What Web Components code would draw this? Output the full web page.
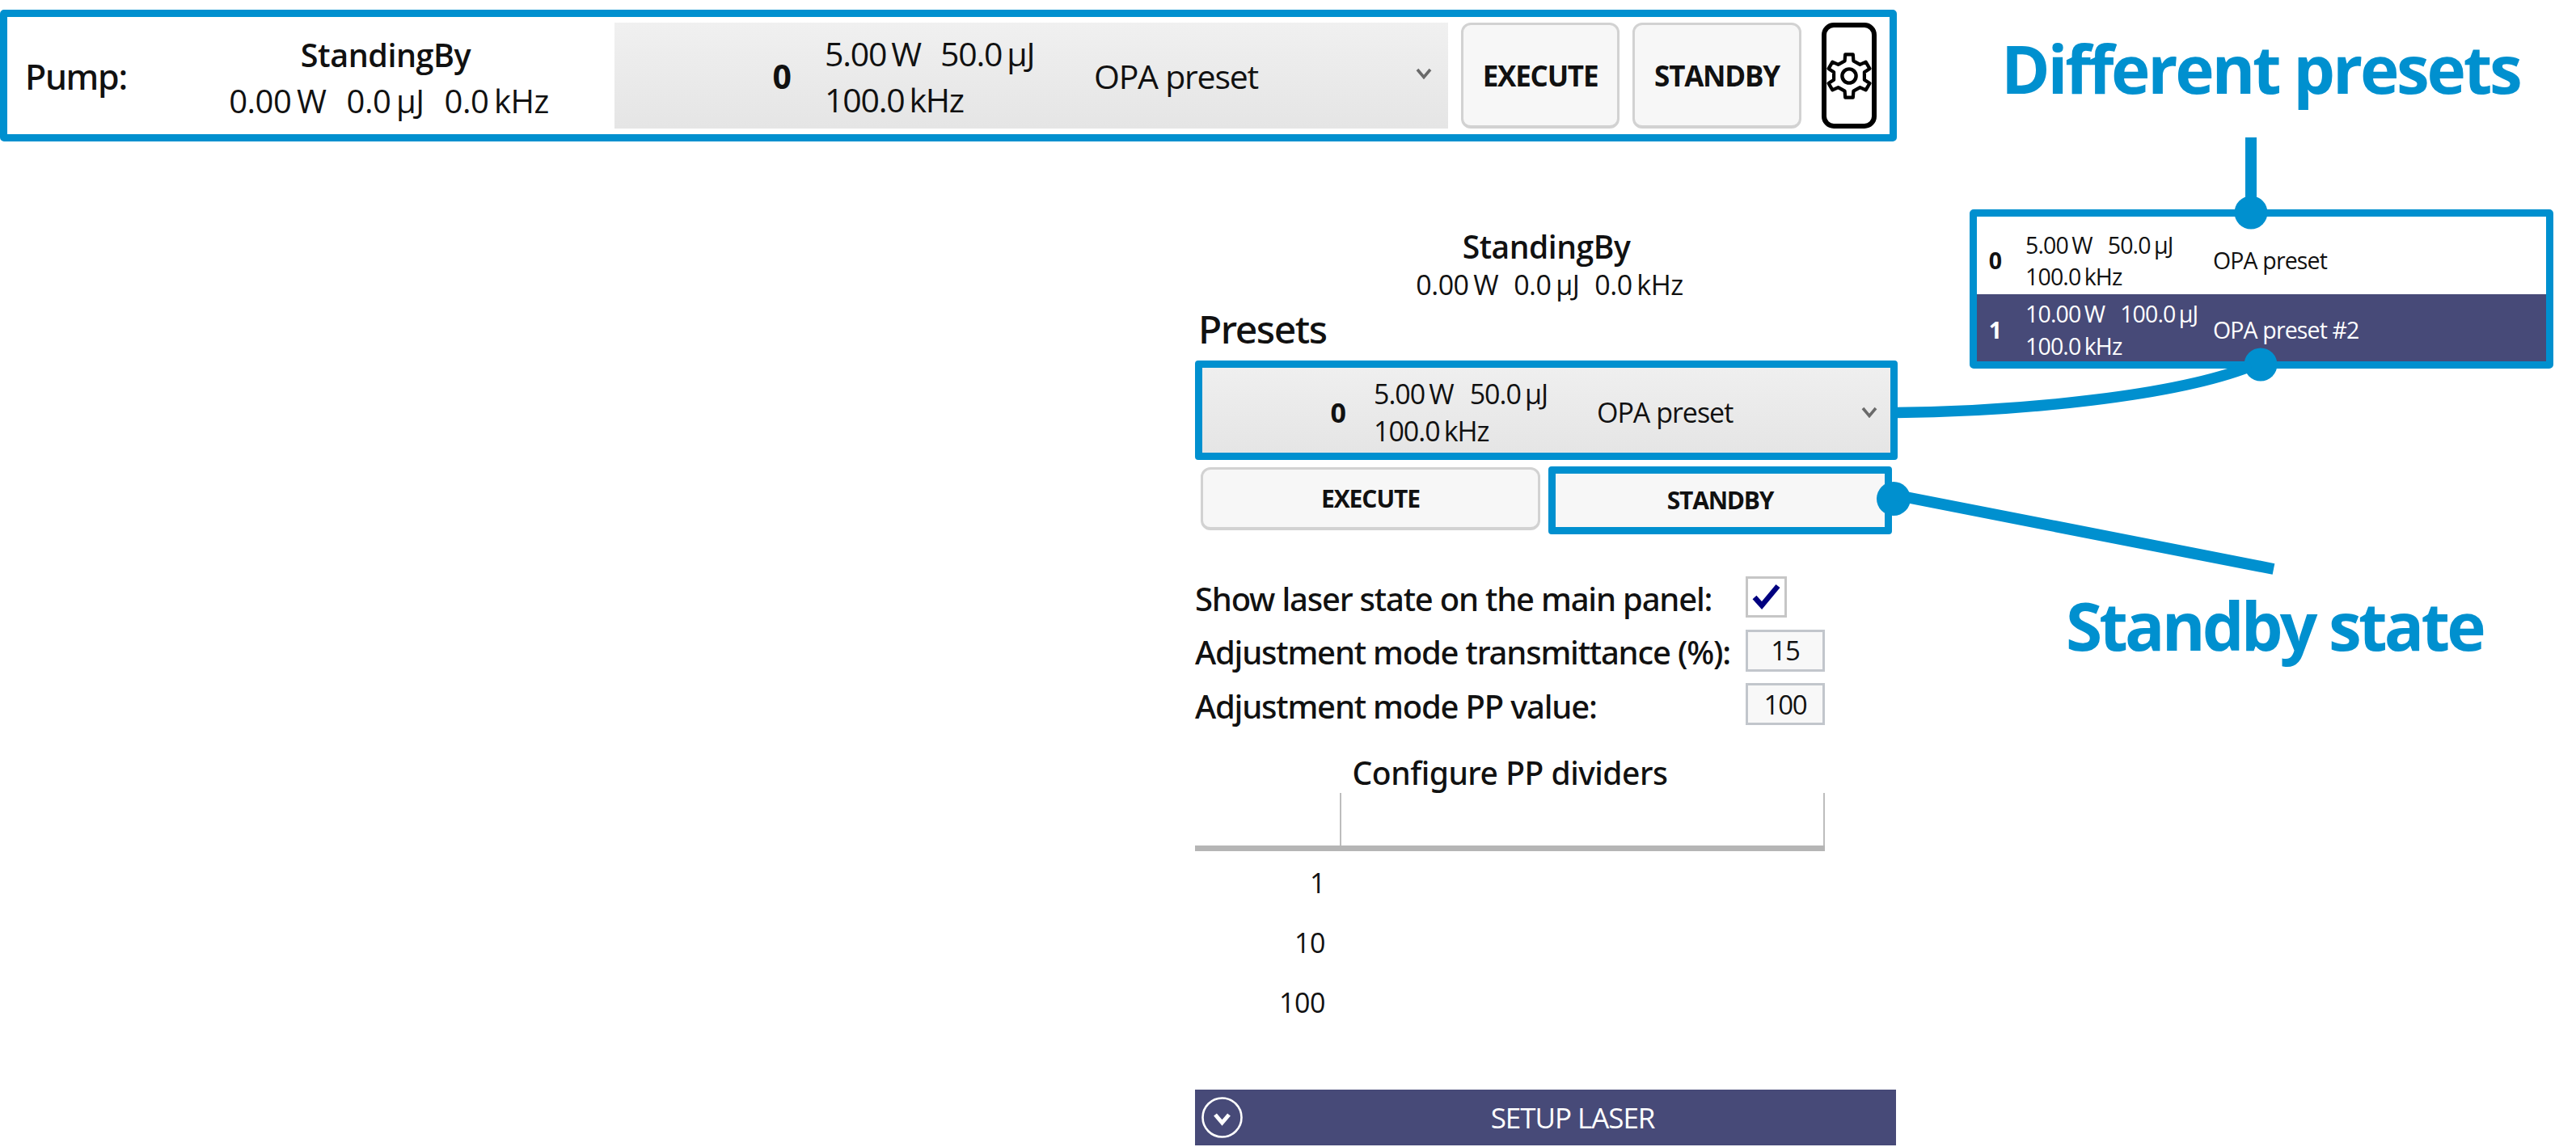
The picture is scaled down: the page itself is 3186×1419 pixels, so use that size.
<!DOCTYPE html>
<html>
<head>
<meta charset="utf-8">
<title>Pump presets</title>
<style>
  html, body { margin: 0; background: #fff; overflow: hidden; }
  body { position: relative; width: 3186px; height: 1419px; font-family: "Open Sans", "Liberation Sans", sans-serif; color: #111; }
</style>
</head>
<body>
  <annotated-page></annotated-page>

<script>
const BLUE = '#0090cf';
const NAVY = '#474a78';
const MEDIUM = '"Noto Sans", "Open Sans", sans-serif';

function gearPath(cx, cy, rOut, rRoot, teeth) {
  const pts = [];
  const step = Math.PI * 2 / teeth;
  for (let i = 0; i < teeth; i++) {
    const a = -Math.PI / 2 + i * step;
    const at = (r, d) => (cx + r * Math.cos(a + d)).toFixed(1) + ' ' + (cy + r * Math.sin(a + d)).toFixed(1);
    pts.push(at(rRoot, -step * 0.27), at(rOut, -step * 0.17), at(rOut, step * 0.17), at(rRoot, step * 0.27));
  }
  return 'M' + pts.join('L') + 'Z';
}

class LaserValues extends HTMLElement {
  constructor() {
    super();
    this.attachShadow({ mode: 'open' });
    const parts = (this.getAttribute('values') || '').split('|');
    this.shadowRoot.innerHTML = `
      <style>
        :host { display: inline-flex; gap: var(--val-gap, 20px); word-spacing: -0.08em; white-space: nowrap; }
      </style>
      ${parts.map(p => `<span>${p}</span>`).join('')}
    `;
  }
}

class LaserStatus extends HTMLElement {
  constructor() {
    super();
    this.attachShadow({ mode: 'open' });
    this.shadowRoot.innerHTML = `
      <style>
        :host { display: flex; flex-direction: column; align-items: center; letter-spacing: -0.03em; }
        .title { font-weight: 600; font-size: var(--title-fs, 37px); line-height: var(--title-lh, 50px); }
        .vals { font-size: var(--fs, 37px); line-height: var(--lh, 50px); padding-left: 8px; }
      </style>
      <div class="title">StandingBy</div>
      <div class="vals"><laser-values values="0.00 W|0.0 µJ|0.0 kHz"></laser-values></div>
    `;
  }
}

class PresetRow extends HTMLElement {
  constructor() {
    super();
    this.attachShadow({ mode: 'open' });
    const chevron = this.hasAttribute('chevron') ? `
      <svg class="chev" width="20" height="14" viewBox="0 0 20 14">
        <path d="M2 2 L10 11.5 L18 2" fill="none" stroke="#6a6a6a" stroke-width="3.6"/>
      </svg>` : '';
    this.shadowRoot.innerHTML = `
      <style>
        :host {
          display: flex; align-items: center; box-sizing: border-box;
          height: var(--row-h); font-size: var(--fs); line-height: var(--lh);
          padding-right: var(--pad-r, 0); padding-top: var(--pad-t, 0); letter-spacing: -0.03em;
        }
        .num { width: var(--num-w); text-align: right; font-weight: 700; flex: none; letter-spacing: 0; }
        .vals { margin-left: var(--num-gap); width: var(--vals-w); flex: none; }
        .vals > div { white-space: nowrap; }
        .name { flex: 1; white-space: nowrap; padding-top: var(--name-shift, 0); }
        .chev { flex: none; margin-bottom: var(--chev-mb, 0); }
      </style>
      <div class="num">${this.getAttribute('num')}</div>
      <div class="vals">
        <div><laser-values values="${this.getAttribute('line')}"></laser-values></div>
        <div><laser-values values="${this.getAttribute('rate')}"></laser-values></div>
      </div>
      <div class="name">${this.getAttribute('name')}</div>
      ${chevron}
    `;
  }
}

class ActionButton extends HTMLElement {
  constructor() {
    super();
    this.attachShadow({ mode: 'open' });
    this.shadowRoot.innerHTML = `
      <style>
        :host {
          display: flex; align-items: center; justify-content: center; box-sizing: border-box;
          background: #f7f7f7; border: 3px solid #d2d2d2; border-bottom-width: 4px; border-radius: var(--btn-r, 12px);
          font-weight: 700; font-size: var(--btn-fs, 35px); letter-spacing: -0.035em;
        }
      </style>
      <slot></slot>
    `;
  }
}

class GearButton extends HTMLElement {
  constructor() {
    super();
    this.attachShadow({ mode: 'open' });
    this.shadowRoot.innerHTML = `
      <style>
        :host {
          display: flex; align-items: center; justify-content: center; box-sizing: border-box;
          width: 68px; height: 131px; background: #fff; border: 6px solid #000; border-radius: 15px;
        }
        svg { display: block; }
      </style>
      <svg width="56" height="60" viewBox="0 0 56 60">
        <path d="${gearPath(28, 30, 27, 19.5, 6)}" fill="none" stroke="#000" stroke-width="4.2" stroke-linejoin="round"/>
        <circle cx="28" cy="30" r="8.6" fill="none" stroke="#000" stroke-width="4.4"/>
      </svg>
    `;
  }
}

class PumpBar extends HTMLElement {
  constructor() {
    super();
    this.attachShadow({ mode: 'open' });
    this.shadowRoot.innerHTML = `
      <style>
        :host {
          display: flex; align-items: center; box-sizing: border-box; flex: none;
          width: 2346px; height: 163px; border: 9px solid ${BLUE}; border-radius: 5px;
          padding: 6px 16px 6px 22px; background: #fff;
        }
        .label { width: 201px; font-family: ${MEDIUM}; font-size: 43px; font-weight: 500; letter-spacing: -0.03em; padding-top: 2px; }
        laser-status { width: 490px; --val-gap: 25px; --title-fs: 39.5px; --fs: 40px; --title-lh: 57px; --lh: 55px; padding-top: 4px; }
        .select {
          margin-left: 38px; width: 1031px; flex: none;
          background: linear-gradient(#f0f0f0, #e5e5e5);
          --row-h: 131px; --fs: 41px; --lh: 57px; --num-w: 219px; --num-gap: 41px; --vals-w: 333px; --pad-r: 20px; --pad-t: 2px; --val-gap: 24px; --chev-mb: 7px;
        }
        action-button { height: 131px; margin-left: 16px; flex: none; }
        .exec { width: 196px; }
        .stand { width: 209px; }
        gear-button { margin-left: 25px; flex: none; }
      </style>
      <div class="label">Pump:</div>
      <laser-status></laser-status>
      <preset-row class="select" chevron num="0" line="5.00 W|50.0 µJ" rate="100.0 kHz" name="OPA preset"></preset-row>
      <action-button class="exec">EXECUTE</action-button>
      <action-button class="stand">STANDBY</action-button>
      <gear-button></gear-button>
    `;
  }
}

class DividerTable extends HTMLElement {
  constructor() {
    super();
    this.attachShadow({ mode: 'open' });
    const rows = (this.getAttribute('rows') || '').split(',');
    this.shadowRoot.innerHTML = `
      <style>
        :host { display: block; width: 779px; letter-spacing: -0.03em; }
        .title { text-align: center; font-family: ${MEDIUM}; font-size: 39px; font-weight: 500; line-height: 50px; }
        .head { display: grid; grid-template-columns: 181px 1fr; height: 65px; border-bottom: 7px solid #b5b5b5; }
        .head div { border-right: 2px solid #bdbdbd; }
        .row { height: 74px; line-height: 74px; width: 161px; text-align: right; font-size: 34px; color: #111; }
        .rows { padding-top: 2px; }
      </style>
      <div class="title">Configure PP dividers</div>
      <div class="head"><div></div><div></div></div>
      <div class="rows">${rows.map(r => `<div class="row">${r}</div>`).join('')}</div>
    `;
  }
}

class SetupBar extends HTMLElement {
  constructor() {
    super();
    this.attachShadow({ mode: 'open' });
    this.shadowRoot.innerHTML = `
      <style>
        :host {
          display: flex; align-items: center; position: relative; box-sizing: border-box;
          width: 867px; height: 69px; background: ${NAVY}; color: #fff; padding-left: 8px;
          font-size: 35px; letter-spacing: -0.03em;
        }
        svg { flex: none; }
        span { flex: 1; text-align: center; padding-left: 8px; padding-top: 1px; }
      </style>
      <svg width="51" height="51" viewBox="0 0 51 51">
        <circle cx="25.5" cy="25.5" r="24" fill="none" stroke="#fff" stroke-width="2.6"/>
        <path d="M17 22 L25.5 32 L34 22" fill="none" stroke="#fff" stroke-width="5"/>
      </svg>
      <span><slot></slot></span>
    `;
  }
}

class LaserSettings extends HTMLElement {
  constructor() {
    super();
    this.attachShadow({ mode: 'open' });
    this.shadowRoot.innerHTML = `
      <style>
        :host { display: block; width: 869px; flex: none; padding-top: 105px; }
        laser-status { --title-fs: 39px; --fs: 34px; --title-lh: 50px; --lh: 44px; --val-gap: 19px; }
        h3 { margin: 0 0 0 4px; height: 72px; font-family: ${MEDIUM}; font-weight: 500; font-size: 48px; line-height: 66px; letter-spacing: -0.03em; }
        .select { border: 9px solid ${BLUE}; border-radius: 4px; }
        preset-row {
          background: linear-gradient(#efefef, #e5e5e5);
          --row-h: 105px; --fs: 34px; --lh: 46px; --num-w: 178px; --num-gap: 34px; --vals-w: 276px; --pad-r: 16px; --pad-t: 5px; --val-gap: 20px;
        }
        .actions { display: flex; margin-top: 8px; padding-left: 7px; }
        .exec { width: 420px; height: 78px; margin-top: 1px; --btn-fs: 30px; }
        .frame { margin-left: 10px; width: 425px; height: 84px; box-sizing: border-box; border: 9px solid ${BLUE}; border-radius: 4px; background: #f7f7f7; padding-bottom: 2px;
          display: flex; align-items: center; justify-content: center; font-weight: 700; font-size: 30px; letter-spacing: -0.04em; }
        .form { margin-top: 44px; display: grid; grid-template-columns: 681px 1fr; grid-auto-rows: 66.5px; align-items: center; font-family: ${MEDIUM}; font-size: 40px; font-weight: 500; letter-spacing: -0.03em; }
        .form label { white-space: nowrap; padding-top: 4px; }
        .check { box-sizing: border-box; width: 51px; height: 51px; border: 3px solid #c6c6c6; display: flex; align-items: center; justify-content: center; }
        .input { box-sizing: border-box; width: 98px; height: 52px; border: 3px solid #c2c6cc; background: #f8f8f8; display: flex; align-items: center; justify-content: center; font-family: "Open Sans", sans-serif; font-weight: 400; font-size: 33px; }
        divider-table { margin-top: 26px; }
        setup-bar { margin-top: 71px; }
      </style>
      <laser-status></laser-status>
      <h3>Presets</h3>
      <div class="select">
        <preset-row chevron num="0" line="5.00 W|50.0 µJ" rate="100.0 kHz" name="OPA preset"></preset-row>
      </div>
      <div class="actions">
        <action-button class="exec">EXECUTE</action-button>
        <div class="frame">STANDBY</div>
      </div>
      <div class="form">
        <label>Show laser state on the main panel:</label>
        <div class="check">
          <svg width="40" height="34" viewBox="0 0 40 34"><path d="M5 18 L14 28 L34 4" fill="none" stroke="#00007f" stroke-width="6.5"/></svg>
        </div>
        <label>Adjustment mode transmittance (%):</label>
        <div class="input">15</div>
        <label>Adjustment mode PP value:</label>
        <div class="input">100</div>
      </div>
      <divider-table rows="1,10,100"></divider-table>
      <setup-bar>SETUP LASER</setup-bar>
    `;
  }
}

class PresetList extends HTMLElement {
  constructor() {
    super();
    this.attachShadow({ mode: 'open' });
    this.shadowRoot.innerHTML = `
      <style>
        :host {
          display: block; width: 722px; box-sizing: border-box; border: 9px solid ${BLUE}; border-radius: 5px; background: #fff;
          --fs: 28.5px; --lh: 39.5px; --num-w: 31px; --num-gap: 29px; --vals-w: 232px; --val-gap: 19px;
        }
        .first { --row-h: 96px; --pad-t: 14px; }
        .second { --row-h: 83px; --pad-t: 6px; background: ${NAVY}; color: #fff; }
      </style>
      <preset-row class="first" num="0" line="5.00 W|50.0 µJ" rate="100.0 kHz" name="OPA preset"></preset-row>
      <preset-row class="second" num="1" line="10.00 W|100.0 µJ" rate="100.0 kHz" name="OPA preset #2"></preset-row>
    `;
  }
}

class CalloutText extends HTMLElement {
  constructor() {
    super();
    this.attachShadow({ mode: 'open' });
    this.shadowRoot.innerHTML = `
      <style>
        :host { display: block; color: ${BLUE}; font-weight: 700; font-size: 82px; line-height: 100px; letter-spacing: var(--ls, -0.04em); white-space: nowrap; }
      </style>
      <slot></slot>
    `;
  }
}

// линии и точки поверх панелей
class CalloutLines extends HTMLElement {
  constructor() {
    super();
    this.attachShadow({ mode: 'open' });
    this.shadowRoot.innerHTML = `
      <style>
        :host { position: absolute; left: 0; top: 0; width: 3186px; height: 1419px; pointer-events: none; }
        svg { display: block; }
      </style>
      <svg width="3186" height="1419" viewBox="0 0 3186 1419">
        <rect x="2777" y="170" width="14" height="90" fill="${BLUE}"/>
        <circle cx="2784" cy="263" r="20.5" fill="${BLUE}"/>
        <circle cx="2796" cy="451" r="20.5" fill="${BLUE}"/>
        <path d="M2345 510.5 C2500 509 2690 490 2784 453" fill="none" stroke="${BLUE}" stroke-width="13.5"/>
        <circle cx="2342" cy="617" r="21" fill="${BLUE}"/>
        <path d="M2342 612 L2812 704" fill="none" stroke="${BLUE}" stroke-width="14"/>
      </svg>
    `;
  }
}

class AnnotatedPage extends HTMLElement {
  constructor() {
    super();
    this.attachShadow({ mode: 'open' });
    this.shadowRoot.innerHTML = `
      <style>
        :host { display: block; width: 3186px; height: 1419px; }
        .top { display: flex; align-items: center; padding-top: 12px; }
        .top callout-text { margin-left: 129px; margin-bottom: 20px; }
        .main { display: flex; padding-left: 1478px; }
        .side { margin-left: 89px; padding-top: 84px; }
        .side callout-text { margin-top: 267px; margin-left: 119px; --ls: -0.047em; }
      </style>
      <div class="top">
        <pump-bar></pump-bar>
        <callout-text>Different presets</callout-text>
      </div>
      <div class="main">
        <laser-settings></laser-settings>
        <div class="side">
          <preset-list></preset-list>
          <callout-text>Standby state</callout-text>
        </div>
      </div>
      <callout-lines></callout-lines>
    `;
  }
}

customElements.define('laser-values', LaserValues);
customElements.define('laser-status', LaserStatus);
customElements.define('preset-row', PresetRow);
customElements.define('action-button', ActionButton);
customElements.define('gear-button', GearButton);
customElements.define('pump-bar', PumpBar);
customElements.define('divider-table', DividerTable);
customElements.define('setup-bar', SetupBar);
customElements.define('laser-settings', LaserSettings);
customElements.define('preset-list', PresetList);
customElements.define('callout-text', CalloutText);
customElements.define('callout-lines', CalloutLines);
customElements.define('annotated-page', AnnotatedPage);
</script>
</body>
</html>
